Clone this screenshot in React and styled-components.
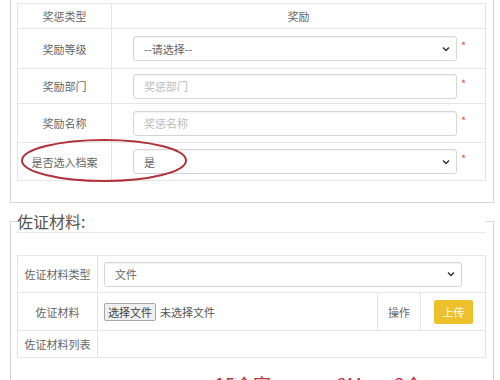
import React from 'react'
import styled, { createGlobalStyle } from 'styled-components'

const GlobalStyle = createGlobalStyle`
  body {
    margin: 0;
    background: #fff;
    color: #555;
    font-family: "Noto Sans CJK SC", "Noto Sans", sans-serif;
    overflow: hidden;
  }
`

const rewardRows = [
  { label: '奖励等级', value: '--请选择--', select: true, height: 40 },
  { label: '奖励部门', placeholder: '奖惩部门', height: 35 },
  { label: '奖励名称', placeholder: '奖惩名称', height: 39 },
  { label: '是否选入档案', value: '是', select: true, height: 38 },
]

const Chevron = () => (
  <svg width="8" height="6" viewBox="0 0 8 6">
    <path d="M1 1.5 L4 4.5 L7 1.5" fill="none" stroke="#333" strokeWidth="1.5" />
  </svg>
)

const Field = ({ value, placeholder, select, width }) => (
  <Input $width={width}>
    <FieldText $placeholder={!value}>{value || placeholder}</FieldText>
    {select && <Chevron />}
  </Input>
)

export default function App() {
  return (
    <Page>
      <GlobalStyle />
      <Panel>
        <Table>
          <colgroup>
            <Col $width={94} />
            <Col />
          </colgroup>
          <tbody>
            <Row $height={25}>
              <LabelCell>奖惩类型</LabelCell>
              <Cell $center>奖励</Cell>
            </Row>
            {rewardRows.map(row => (
              <Row key={row.label} $height={row.height}>
                <LabelCell>{row.label}</LabelCell>
                <ValueCell $indent={21}>
                  <FieldLine>
                    <Field {...row} width={324} />
                    <Required>*</Required>
                  </FieldLine>
                </ValueCell>
              </Row>
            ))}
          </tbody>
        </Table>
        <Ellipse width="168" height="45" viewBox="0 0 168 45">
          <ellipse cx="84" cy="22.5" rx="82" ry="20.5" fill="none" stroke="#b0323a" strokeWidth="2" />
        </Ellipse>
      </Panel>

      <Fieldset>
        <Legend>佐证材料:</Legend>
        <Table>
          <colgroup>
            <Col $width={80} />
            <Col $width={280} />
            <Col $width={43} />
            <Col />
          </colgroup>
          <tbody>
            <Row $height={37}>
              <LabelCell>佐证材料类型</LabelCell>
              <ValueCell colSpan={3} $indent={6}>
                <Field value="文件" select width={358} />
              </ValueCell>
            </Row>
            <Row $height={38}>
              <LabelCell>佐证材料</LabelCell>
              <ValueCell $indent={6}>
                <FileButton>选择文件</FileButton>
                <FileName>未选择文件</FileName>
              </ValueCell>
              <Cell $center>操作</Cell>
              <ValueCell $indent={13}>
                <UploadButton>上传</UploadButton>
              </ValueCell>
            </Row>
            <Row $height={27}>
              <LabelCell>佐证材料列表</LabelCell>
              <Cell colSpan={3} />
            </Row>
          </tbody>
        </Table>
        <Note>
          提示：上传的佐证材料文件名称请勿超过<Red>15个字</Red>，文件不超过<Red>2M</Red>，最多<Red>3个</Red>文件
        </Note>
      </Fieldset>
    </Page>
  )
}

const Page = styled.div`
  width: 500px;
  height: 380px;
  overflow: hidden;
  box-sizing: border-box;
  padding: 0 6px 0 10px;
`

const Panel = styled.div`
  position: relative;
  border: 1px solid #d6d6d6;
  border-top: none;
  padding: 3px 7px 21px 6px;
`

const Table = styled.table`
  width: 100%;
  border-collapse: collapse;
  table-layout: fixed;
  font-size: 11px;
`

const Col = styled.col`
  ${p => p.$width && `width: ${p.$width}px;`}
`

const Row = styled.tr`
  height: ${p => p.$height}px;
`

const Cell = styled.td`
  border: 1px solid #e6e6e6;
  padding: 0;
  vertical-align: middle;
  text-align: ${p => (p.$center ? 'center' : 'left')};
  color: #666;
`

const LabelCell = styled(Cell)`
  text-align: center;
  color: #666;
  white-space: nowrap;
`

const ValueCell = styled(Cell)`
  padding-left: ${p => p.$indent}px;
  white-space: nowrap;
`

const FieldLine = styled.div`
  display: flex;
  align-items: flex-start;
`

const Input = styled.div`
  width: ${p => p.$width}px;
  height: 25px;
  box-sizing: border-box;
  border: 1px solid #d6d6d6;
  border-radius: 3px;
  box-shadow: inset 0 1px 1px rgba(0, 0, 0, 0.05);
  padding: 0 6px 0 10px;
  display: flex;
  align-items: center;
  justify-content: space-between;
  background: #fff;
`

const FieldText = styled.span`
  color: ${p => (p.$placeholder ? '#bbb' : '#666')};
  font-size: 11px;
`

const Required = styled.span`
  color: #d9534f;
  font-size: 11px;
  line-height: 11px;
  margin: 4px 0 0 4px;
`

const Ellipse = styled.svg`
  position: absolute;
  left: 9px;
  top: 138px;
  pointer-events: none;
`

const Fieldset = styled.fieldset`
  margin: 7px 0 0;
  padding: 0 7px 0 6px;
  border: 1px solid #d6d6d6;
  min-width: 0;
`

const Legend = styled.legend`
  width: 100%;
  padding: 0;
  margin: 0 0 22px;
  font-size: 16px;
  line-height: 22px;
  color: #555;
  border-bottom: 1px solid #e8e8e8;
`

const FileButton = styled.span`
  display: inline-block;
  height: 18px;
  line-height: 16px;
  box-sizing: border-box;
  padding: 0 3px;
  border: 1px solid #a8a8a8;
  border-radius: 2px;
  background: #efefef;
  color: #444;
  font-size: 11px;
  vertical-align: middle;
`

const FileName = styled.span`
  margin-left: 4px;
  color: #555;
  font-size: 11px;
  vertical-align: middle;
`

const UploadButton = styled.span`
  display: inline-block;
  width: 39px;
  height: 24px;
  line-height: 24px;
  text-align: center;
  background: #eec12c;
  color: #fff;
  border-radius: 2px;
  font-size: 11px;
`

const Note = styled.div`
  margin-top: 14px;
  font-size: 11px;
  line-height: 24px;
  color: #a0a0a0;
  white-space: nowrap;
`

const Red = styled.span`
  color: #c0303a;
  font-size: 18px;
`
